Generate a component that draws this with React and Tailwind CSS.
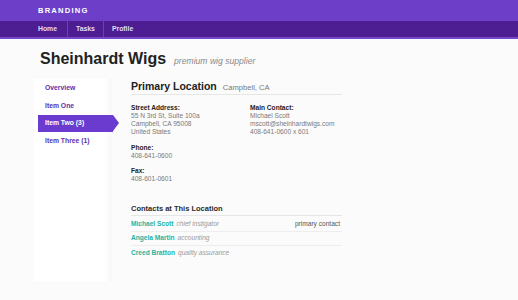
import React from 'react';

const navItems = ['Home', 'Tasks', 'Profile'];
const sideItems = [
  { label: 'Overview' },
  { label: 'Item One' },
  { label: 'Item Two (3)', active: true },
  { label: 'Item Three (1)' },
];
const contacts = [
  { name: 'Michael Scott', role: 'chief instigator', note: 'primary contact' },
  { name: 'Angela Martin', role: 'accounting' },
  { name: 'Creed Bratton', role: 'quality assurance' },
];

function Block({ label, lines, className = '' }) {
  return (
    <div className={`leading-[8px] text-[6.6px] ${className}`}>
      <div className="font-bold text-[#222]">{label}</div>
      {lines.map((l) => (
        <div key={l} className="text-[#7a7a7a]">{l}</div>
      ))}
    </div>
  );
}

export default function App() {
  return (
    <div className="min-h-[300px] w-[518px] bg-[#fbfbfb] font-['Liberation_Sans',Arial,sans-serif]">
      <header>
        <div className="flex h-[21px] items-center bg-[#6d3fc9] pl-[38px]">
          <span className="text-[7.6px] font-bold tracking-[1.2px] text-white">BRANDING</span>
        </div>
        <nav className="flex h-[18px] items-center border-b-2 border-[#7448c9] bg-[#4c1e92] pl-[38px]">
          {navItems.map((item, i) => (
            <span
              key={item}
              className={`flex h-full items-center text-[6.85px] font-bold text-[#e4dcf5] ${i === 0 ? 'pr-[10px]' : 'px-[8px]'} ${i < navItems.length - 1 ? 'border-r border-[#6a41b0]' : ''}`}
            >
              {item}
            </span>
          ))}
        </nav>
      </header>

      <div className="flex items-baseline pl-[40px] pt-[11px]">
        <h1 className="text-[16px] leading-[18px] font-bold text-[#222]">Sheinhardt Wigs</h1>
        <span className="ml-[8px] text-[8.6px] italic text-[#8a8a8a]">premium wig supplier</span>
      </div>

      <div className="mt-[11px] flex">
        <aside className="ml-[34px] h-[202px] w-[78px] bg-white pl-[4px] pt-[0.5px] shadow-[inset_-9px_0_9px_-8px_rgba(0,0,0,0.06)]">
          {sideItems.map((item) =>
            item.active ? (
              <div key={item.label} className="-mr-[7px] flex h-[17.5px] items-center">
                <span className="flex h-full flex-1 items-center bg-[#6b3bd0] pl-[7px] text-[6.8px] font-bold text-white">
                  {item.label}
                </span>
                <span className="h-0 w-0 border-y-[8.75px] border-l-[6px] border-y-transparent border-l-[#6b3bd0]" />
              </div>
            ) : (
              <div key={item.label} className="flex h-[17.5px] items-center pl-[7px] text-[6.8px] font-bold text-[#5b30ae]">
                {item.label}
              </div>
            )
          )}
        </aside>

        <main className="ml-[19px] w-[211px]">
          <div className="flex items-baseline border-b border-[#e6e6e6] pb-px">
            <h2 className="text-[10.5px] leading-[14px] font-bold text-[#222]">Primary Location</h2>
            <span className="ml-[6px] text-[7.6px] text-[#777]">Campbell, CA</span>
          </div>

          <div className="mt-[8.5px] grid grid-cols-[119px_1fr]">
            <Block label="Street Address:" lines={['55 N 3rd St, Suite 100a', 'Campbell, CA 95008', 'United States']} />
            <Block label="Main Contact:" lines={['Michael Scott', 'mscott@sheinhardtwigs.com', '408-641-0600 x 601']} />
          </div>
          <Block className="mt-[8.3px]" label="Phone:" lines={['408-641-0600']} />
          <Block className="mt-[7px]" label="Fax:" lines={['408-601-0601']} />

          <div className="mt-[21px] border-b border-[#e6e6e6] pb-px">
            <h3 className="text-[7.5px] leading-[10px] font-bold text-[#2a2a2a]">Contacts at This Location</h3>
          </div>
          <div className="mt-[1.5px]">
            {contacts.map((c, i) => (
              <div
                key={c.name}
                className={`flex h-[14px] items-center text-[6.6px] ${i < contacts.length - 1 ? 'border-b border-[#eeeeee]' : ''}`}
              >
                <span className="font-bold text-[#1fb3a1]">{c.name}</span>
                <span className="ml-[3px] italic text-[#9a9a9a]">{c.role}</span>
                {c.note && <span className="ml-auto mr-[2px] text-[#555]">{c.note}</span>}
              </div>
            ))}
          </div>
        </main>
      </div>
    </div>
  );
}
